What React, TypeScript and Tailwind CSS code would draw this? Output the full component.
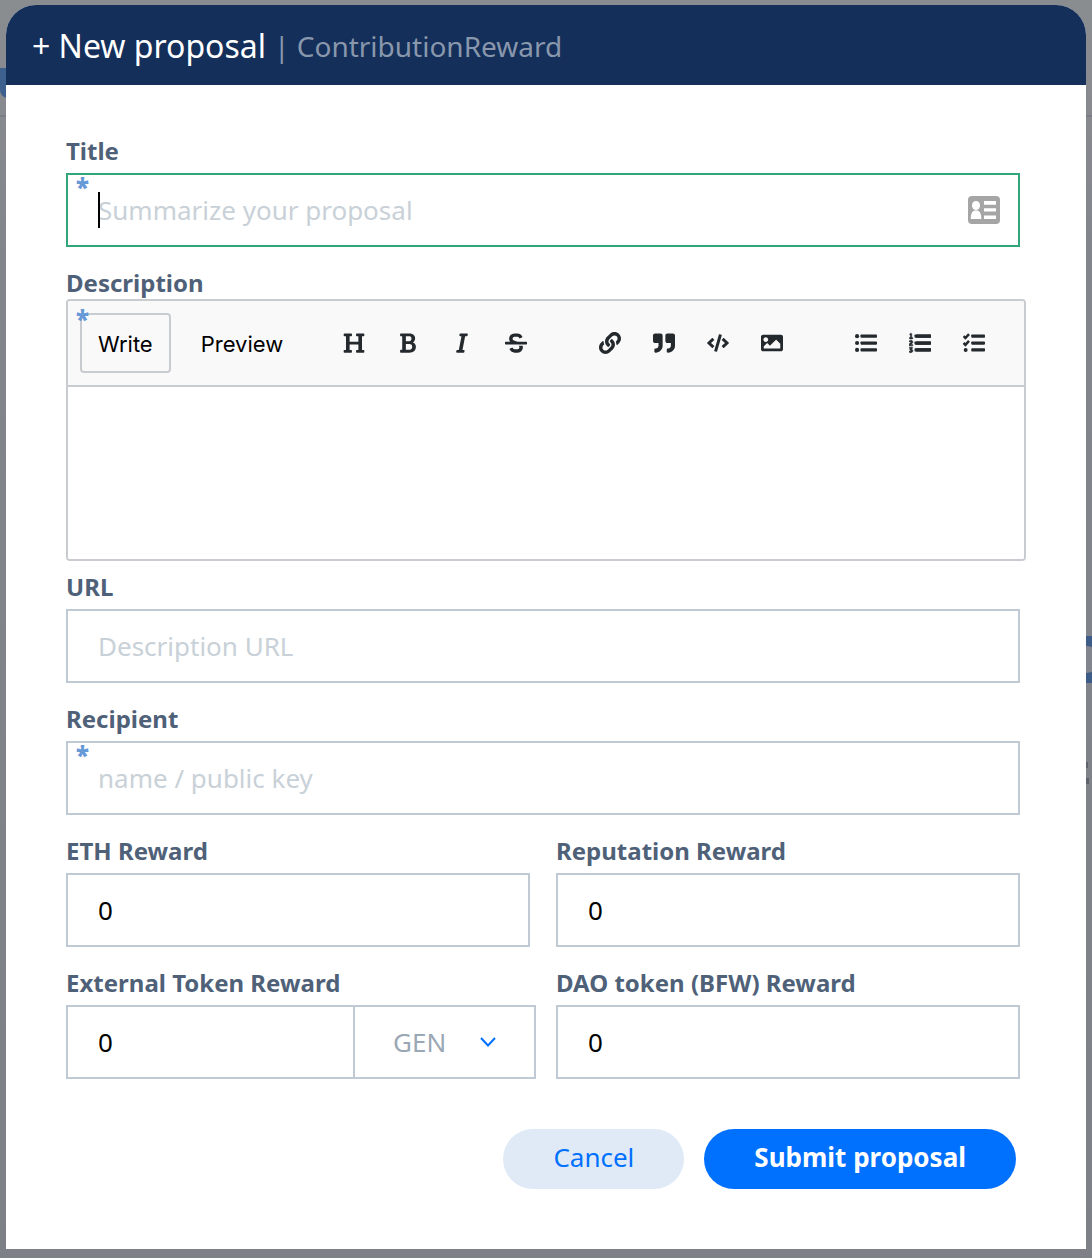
import type { ReactNode } from "react";
import { FaCode, FaImage, FaLink, FaListOl, FaQuoteRight, FaStrikethrough } from "react-icons/fa";

function HeadingIcon() {
  return (
    <svg viewBox="0 0 512 512" fill="currentColor" className="size-[22px]" aria-hidden="true">
      <path d="M496 80V48c0-8.837-7.163-16-16-16H320c-8.837 0-16 7.163-16 16v32c0 8.837 7.163 16 16 16h37.621v128H154.379V96H192c8.837 0 16-7.163 16-16V48c0-8.837-7.163-16-16-16H32c-8.837 0-16 7.163-16 16v32c0 8.837 7.163 16 16 16h37.275v320H32c-8.837 0-16 7.163-16 16v32c0 8.837 7.163 16 16 16h160c8.837 0 16-7.163 16-16v-32c0-8.837-7.163-16-16-16h-37.621V288H357.62v128H320c-8.837 0-16 7.163-16 16v32c0 8.837 7.163 16 16 16h160c8.837 0 16-7.163 16-16v-32c0-8.837-7.163-16-16-16h-37.275V96H480c8.837 0 16-7.163 16-16z" />
    </svg>
  );
}

function BoldIcon() {
  return (
    <svg viewBox="0 0 384 512" fill="currentColor" className="size-[22px]" aria-hidden="true">
      <path d="M304.793 243.891c33.639-18.537 53.657-54.16 53.657-95.693 0-48.236-26.25-87.626-68.626-104.179C265.138 34.01 240.849 32 209.661 32H24c-8.837 0-16 7.163-16 16v33.113c0 8.837 7.163 16 16 16h33.113v318.53H24c-8.837 0-16 7.163-16 16V464c0 8.837 7.163 16 16 16h195.69c24.203 0 44.834-1.509 66.534-8.33C337.45 455.193 376 407.73 376 346.937c0-52.858-29.371-91.839-71.207-103.046zM142.217 100.809h67.444c16.294 0 27.536 2.019 37.525 6.717 15.828 8.479 24.906 26.502 24.906 49.446 0 35.029-20.32 56.79-53.029 56.79h-76.846V100.809zm112.642 305.475c-10.14 4.056-22.677 4.907-31.409 4.907h-81.233V281.943h84.367c39.645 0 63.057 25.38 63.057 63.057 0 28.425-13.66 52.483-34.782 61.284z" />
    </svg>
  );
}

function ItalicIcon() {
  return (
    <svg viewBox="0 0 320 512" fill="currentColor" className="size-[22px]" aria-hidden="true">
      <path d="M204.758 416h-33.849l62.092-320h40.725a16 16 0 0 0 15.704-12.937l6.242-32C297.599 41.184 290.034 32 279.968 32H120.235a16 16 0 0 0-15.704 12.937l-6.242 32C96.362 86.816 103.927 96 113.993 96h33.846l-62.09 320H46.278a16 16 0 0 0-15.704 12.935l-6.245 32C22.402 470.815 29.967 480 40.034 480h158.479a16 16 0 0 0 15.704-12.935l6.245-32c1.927-9.88-5.638-19.065-15.704-19.065z" />
    </svg>
  );
}

function Bars({ x }: { x: number }) {
  return (
    <>
      {[60, 220, 380].map((y) => (
        <rect key={y} x={x} y={y} width={512 - x} height="74" rx="18" />
      ))}
    </>
  );
}

function BulletListIcon() {
  return (
    <svg viewBox="0 0 512 512" fill="currentColor" className="size-[22px]" aria-hidden="true">
      <circle cx="48" cy="97" r="48" />
      <circle cx="48" cy="257" r="48" />
      <circle cx="48" cy="417" r="48" />
      <Bars x={128} />
    </svg>
  );
}

function NumberListIcon() {
  return (
    <svg viewBox="0 0 512 512" fill="currentColor" className="size-[22px]" aria-hidden="true">
      <FaListOl size={512} stroke="currentColor" strokeWidth="12" />
      <Bars x={128} />
    </svg>
  );
}

function TaskListIcon() {
  return (
    <svg viewBox="0 0 512 512" fill="currentColor" className="size-[22px]" aria-hidden="true">
      <path d="M12 96l44 44 84-92M12 256l44 44 84-92" fill="none" stroke="currentColor" strokeWidth="58" />
      <circle cx="62" cy="417" r="46" />
      <Bars x={192} />
    </svg>
  );
}

const toolGroups = [
  [
    { name: "Heading", Icon: HeadingIcon },
    { name: "Bold", Icon: BoldIcon },
    { name: "Italic", Icon: ItalicIcon },
    { name: "Strikethrough", Icon: FaStrikethrough },
  ],
  [
    { name: "Link", Icon: FaLink },
    { name: "Quote", Icon: FaQuoteRight },
    { name: "Code", Icon: FaCode },
    { name: "Image", Icon: FaImage },
  ],
  [
    { name: "Bulleted list", Icon: BulletListIcon },
    { name: "Numbered list", Icon: NumberListIcon },
    { name: "Task list", Icon: TaskListIcon },
  ],
];

function Label({ id, children, tight }: { id: string; children: ReactNode; tight?: boolean }) {
  return (
    <label
      htmlFor={id}
      className={`block text-[24px] leading-[28px] font-bold text-[#4f6178] ${tight ? "mb-[2px]" : "mb-2"}`}
    >
      {children}
    </label>
  );
}

function Required({ low }: { low?: boolean }) {
  return (
    <span
      aria-hidden="true"
      className={`absolute left-[10px] z-10 text-[24px] leading-[28px] font-black text-[#6699d8] ${low ? "top-[6px]" : "top-0"}`}
    >
      *
    </span>
  );
}

interface FieldProps {
  id: string;
  label: string;
  placeholder?: string;
  value?: string;
  required?: boolean;
  active?: boolean;
}

function Field({ id, label, placeholder, value, required, active }: FieldProps) {
  return (
    <div>
      <Label id={id}>{label}</Label>
      <div className="relative">
        {required && <Required />}
        <input
          id={id}
          type="text"
          placeholder={placeholder}
          defaultValue={value}
          className={`block h-[74px] w-full border-2 bg-white px-[30px] text-[26px] text-black outline-none placeholder:text-[#c9d1d8] ${active ? "border-[#32a67a]" : "border-[#bfcad4]"}`}
        />
        {active && (
          <>
            <span className="absolute top-[19px] left-8 h-9 w-[2px] bg-black" />
            <svg viewBox="0 0 32 28" className="absolute top-[23px] right-5 h-7 w-8" aria-hidden="true">
              <rect width="32" height="28" rx="4" fill="#a5a5a5" />
              <ellipse cx="8" cy="9.500" rx="4" ry="4.600" fill="#fff" />
              <path d="M2.700 23c0-5 1.300-8 4-8.600h2.600c2.700.6 4 3.600 4 8.600z" fill="#fff" />
              <path d="M16 5h12v3.700H16zM16 12.200h12v3.300H16zM16 19.500h12V23H16z" fill="#fff" />
            </svg>
          </>
        )}
      </div>
    </div>
  );
}

function Backdrop() {
  return (
    <div aria-hidden="true" className="pointer-events-none absolute inset-0 overflow-hidden bg-linear-to-b from-[#8a8d90] via-[#83858d] via-20% to-[#7d8087]">
      <div className="absolute top-[115px] h-[2px] w-full bg-[#7a7d85]" />
      <div className="absolute top-[68px] left-0 h-[30px] w-10 rounded-bl-lg bg-[#3d608f]" />
      <div className="absolute top-[636px] -right-2 h-[47px] w-8 bg-[#3d5c87] py-[10px]">
        <div className="h-full rounded-r-[14px] bg-[#82858d]" />
      </div>
      <div className="absolute top-[762px] right-1 h-[6px] w-1 bg-[#5f636b]" />
      <div className="absolute top-[778px] right-[3px] h-[6px] w-1 bg-[#5f636b]" />
    </div>
  );
}

export default function App() {
  return (
    <div className="relative flow-root min-h-screen font-['Noto_Sans',sans-serif]">
      <Backdrop />
      <main className="relative mx-[6px] mt-[5px] mb-[9px] rounded-t-[30px] bg-white">
        <header className="flex h-20 items-center rounded-t-[30px] bg-[#132f5a] px-[26px] pt-[2px]">
          <h1 className="text-[32px] leading-10 text-white">+ New proposal</h1>
          <span className="ml-2 text-[28px] leading-10 text-[#8997ac]">| ContributionReward</span>
        </header>

        <form className="px-[60px] pt-[52px] pb-[60px]" onSubmit={(e) => e.preventDefault()}>
          <div className="mr-[6px]">
            <Field id="title" label="Title" placeholder="Summarize your proposal" required active />
          </div>

          <div className="mt-[22px]">
            <Label id="description" tight>
              Description
            </Label>
            <div className="relative">
              <Required low />
              <div className="overflow-hidden rounded-[4px] border-2 border-[#c8ccd0]">
                <div className="flex items-center border-b-2 border-[#c8ccd0] bg-[#f9f9f9] p-3 font-[Inter,sans-serif] text-[22px] text-black">
                  <button type="button" className="h-[60px] rounded-[4px] border-2 border-[#c8ccd0] px-4 pt-[2px]">
                    Write
                  </button>
                  <button type="button" className="ml-3 h-[60px] px-[18px] pt-[2px]">
                    Preview
                  </button>
                  <div className="ml-[26px] flex flex-1 gap-10 text-[#24292e]">
                    {toolGroups.map((group, i) => (
                      <div key={group[0].name} className={`flex ${i === 2 ? "ml-auto mr-[11px]" : ""}`}>
                        {group.map(({ name, Icon }) => (
                          <button key={name} type="button" aria-label={name} className="flex h-[60px] w-[54px] items-center justify-center">
                            <Icon className="size-[22px]" />
                          </button>
                        ))}
                      </div>
                    ))}
                  </div>
                </div>
                <textarea id="description" className="block h-[172px] w-full resize-none bg-white p-5 text-[26px] outline-none" />
              </div>
            </div>
          </div>

          <div className="mt-3 mr-[6px] flex flex-col gap-[22px]">
            <Field id="url" label="URL" placeholder="Description URL" />
            <Field id="recipient" label="Recipient" placeholder="name / public key" required />
            <div className="grid grid-cols-2 gap-x-[26px] gap-y-[22px]">
              <Field id="eth" label="ETH Reward" value="0" />
              <Field id="reputation" label="Reputation Reward" value="0" />
              <div className="-mr-[6px]">
                <Label id="external">External Token Reward</Label>
                <div className="flex h-[74px] border-2 border-[#bfcad4] text-[26px]">
                  <input id="external" type="text" defaultValue="0" className="min-w-0 flex-1 px-[30px] text-black outline-none" />
                  <div className="relative w-[181px] border-l-2 border-[#bfcad4]">
                    <select aria-label="External token" className="size-full appearance-none bg-white pl-[38px] text-[#9aa7b4] outline-none">
                      <option>GEN</option>
                    </select>
                    <svg viewBox="0 0 16 10" className="pointer-events-none absolute top-[30px] right-[38px] h-[10px] w-4" fill="none" stroke="#0071ff" strokeWidth="2">
                      <path d="M1 1l7 7.500L15 1" />
                    </svg>
                  </div>
                </div>
              </div>
              <Field id="dao" label="DAO token (BFW) Reward" value="0" />
            </div>
          </div>

          <div className="mt-[50px] mr-[10px] flex justify-end gap-5 text-[26px]">
            <button type="button" className="h-[60px] rounded-[30px] bg-[#e0eaf7] px-[50px] pb-1 text-[#0071ff]">
              Cancel
            </button>
            <button type="submit" className="h-[60px] rounded-[30px] bg-[#0071ff] px-[50px] pb-1 font-bold text-white">
              Submit proposal
            </button>
          </div>
        </form>
      </main>
    </div>
  );
}
